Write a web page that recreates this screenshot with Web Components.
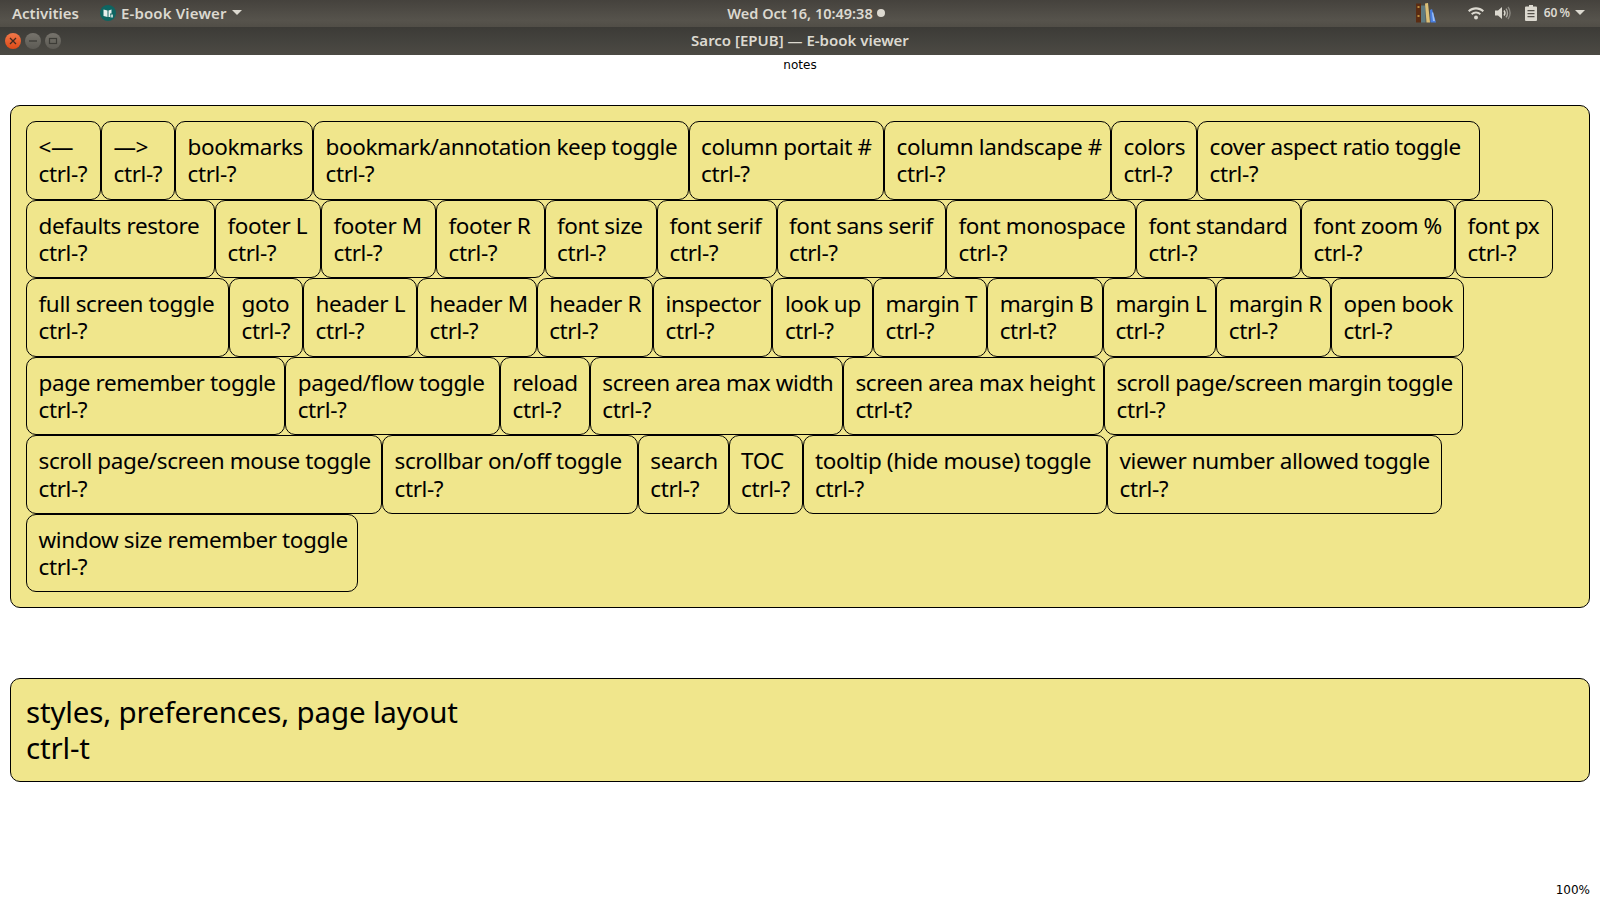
<!DOCTYPE html>
<html lang="en">
<head>
<meta charset="utf-8">
<title>Sarco [EPUB] — E-book viewer</title>
<style>
html, body { margin: 0; height: 100%; background: #fff; overflow: hidden; }
body { display: flex; flex-direction: column; height: 900px; }
</style>
</head>
<body>
<top-bar></top-bar>
<title-bar>Sarco [EPUB] — E-book viewer</title-bar>
<notes-page>
  <key-panel>
    <key-cap w="75" name="&lt;—"></key-cap><key-cap w="74" name="—&gt;"></key-cap><key-cap w="138" name="bookmarks"></key-cap><key-cap w="375.5" name="bookmark/annotation keep toggle"></key-cap><key-cap w="195.5" name="column portait #"></key-cap><key-cap w="227" name="column landscape #"></key-cap><key-cap w="86" name="colors"></key-cap><key-cap w="282.6" name="cover aspect ratio toggle"></key-cap>
    <key-cap w="189" name="defaults restore"></key-cap><key-cap w="106" name="footer L"></key-cap><key-cap w="115" name="footer M"></key-cap><key-cap w="108.5" name="footer R"></key-cap><key-cap w="112.5" name="font size"></key-cap><key-cap w="119.5" name="font serif"></key-cap><key-cap w="169.5" name="font sans serif"></key-cap><key-cap w="190" name="font monospace"></key-cap><key-cap w="165" name="font standard"></key-cap><key-cap w="154" name="font zoom %"></key-cap><key-cap w="98" name="font px"></key-cap>
    <key-cap w="203" name="full screen toggle"></key-cap><key-cap w="74" name="goto"></key-cap><key-cap w="114" name="header L"></key-cap><key-cap w="119.7" name="header M"></key-cap><key-cap w="116.3" name="header R"></key-cap><key-cap w="119.4" name="inspector"></key-cap><key-cap w="100.6" name="look up"></key-cap><key-cap w="114.2" name="margin T"></key-cap><key-cap w="115.8" name="margin B" combo="ctrl-t?"></key-cap><key-cap w="113.3" name="margin L"></key-cap><key-cap w="114.7" name="margin R"></key-cap><key-cap w="133" name="open book"></key-cap>
    <key-cap w="259.2" name="page remember toggle"></key-cap><key-cap w="214.8" name="paged/flow toggle"></key-cap><key-cap w="89.8" name="reload"></key-cap><key-cap w="253.1" name="screen area max width"></key-cap><key-cap w="261.1" name="screen area max height" combo="ctrl-t?"></key-cap><key-cap w="358.8" name="scroll page/screen margin toggle"></key-cap>
    <key-cap w="356" name="scroll page/screen mouse toggle"></key-cap><key-cap w="255.8" name="scrollbar on/off toggle"></key-cap><key-cap w="90.8" name="search"></key-cap><key-cap w="74" name="TOC"></key-cap><key-cap w="304.4" name="tooltip (hide mouse) toggle"></key-cap><key-cap w="335" name="viewer number allowed toggle"></key-cap>
    <key-cap w="331.7" name="window size remember toggle"></key-cap>
  </key-panel>
  <key-panel big>styles, preferences, page layout<br>ctrl-t</key-panel>
</notes-page>

<script>
const UI_FONT = '"Noto Sans", "Open Sans", sans-serif';

class TopBar extends HTMLElement {
    constructor() {
        super();
        this.attachShadow({ mode: 'open' });
    }

    connectedCallback() {
        this.shadowRoot.innerHTML = `
            <style>
                :host {
                    display: grid;
                    grid-template-columns: 1fr auto 1fr;
                    align-items: center;
                    height: 27px;
                    flex: none;
                    padding: 0 15px 2px 12px;
                    box-sizing: border-box;
                    background: linear-gradient(#45423d, #56534c 75%, #514e47);
                    color: #dcd9d0;
                    font: 600 15px ${UI_FONT};
                }
                .left, .center, .right { display: flex; align-items: center; }
                .app { margin-left: 21px; gap: 5px; letter-spacing: 0.15px; }
                .center { padding-left: 15px; font-size: 14.5px; }
                .dot { width: 8px; height: 8px; margin-left: 4px; border-radius: 50%; background: #dcd9d0; }
                .right { justify-content: flex-end; }
                svg { display: block; flex: none; }
            </style>
            <div class="left">
                <span>Activities</span>
                <div class="left app">
                    <svg width="16" height="16" viewBox="0 0 16 16">
                        <circle cx="8" cy="8" r="8" fill="#0e6562"/>
                        <path d="M3.5 4.5 7.5 5.5V12L3.5 11ZM8.5 5.5 11.5 4.5V8.5L10 8.5 10 12 8.5 12Z" fill="#e8f0ee"/>
                        <path d="M10.5 9.5h2.5v3h-2.5z" fill="#b8d4d0"/>
                    </svg>
                    <span>E-book Viewer</span>
                    <svg width="10" height="5" viewBox="0 0 10 5"><path d="M0 0h10L5 5z" fill="#dcd9d0"/></svg>
                </div>
            </div>
            <div class="center"><span>Wed Oct 16, 10:49:38</span><span class="dot"></span></div>
            <div class="right">
                <svg width="20" height="20" viewBox="0 0 20 20" style="margin-right:32px">
                    <rect x="0" y="0.5" width="5" height="19" fill="#5b2c12"/>
                    <rect x="1.5" y="3" width="2" height="2" fill="#b98a3c"/>
                    <rect x="1.5" y="12" width="2" height="2" fill="#b98a3c"/>
                    <rect x="5" y="2.5" width="4.5" height="17" fill="#5f7a80"/>
                    <path d="M9 .5 12 0 14 19.5H10.5Z" fill="#dcc078"/>
                    <path d="M14 7 16 6 20 19.5H14.5Z" fill="#4a7fe0"/>
                    <path d="M16 10 17 9 19 18H17Z" fill="#9cc0f4"/>
                </svg>
                <svg width="16" height="14" viewBox="0 0 16 14" style="margin-right:11px">
                    <path d="M0 4.6C4.4.2 11.6.2 16 4.6L14.6 6C11 2.6 5 2.6 1.4 6Z" fill="#dcd9d0"/>
                    <path d="M3 7.6C5.8 4.8 10.2 4.8 13 7.6L11.6 9C9.6 7 6.4 7 4.4 9Z" fill="#dcd9d0"/>
                    <circle cx="8" cy="11.6" r="2" fill="#dcd9d0"/>
                </svg>
                <svg width="16" height="14" viewBox="0 0 16 14" style="margin-right:14px">
                    <path d="M0 4.5H3L7 1V13L3 9.5H0Z" fill="#dcd9d0"/>
                    <path d="M9 4.5C10.2 6 10.2 8 9 9.5" fill="none" stroke="#dcd9d0" stroke-width="1.4"/>
                    <path d="M11 2.6C13 5 13 9 11 11.4" fill="none" stroke="#aaa79f" stroke-width="1.4"/>
                    <path d="M13 1C15.8 4.4 15.8 9.6 13 13" fill="none" stroke="#8a8780" stroke-width="1.4"/>
                </svg>
                <svg width="12" height="16" viewBox="0 0 12 16" style="margin-right:7px">
                    <path d="M4 0h4v1.5h3a1 1 0 0 1 1 1V15a1 1 0 0 1-1 1H1a1 1 0 0 1-1-1V2.500a1 1 0 0 1 1-1h3Z" fill="#dcd9d0"/>
                    <path d="M2.500 5h7v1.300h-7zM2.500 8h7v1.300h-7zM2.500 11h7v1.300h-7z" fill="#55524b"/>
                </svg>
                <span style="font-size:12px;word-spacing:-1px">60 %</span>
                <svg width="10" height="5" viewBox="0 0 10 5" style="margin-left:5px"><path d="M0 0h10L5 5z" fill="#dcd9d0"/></svg>
            </div>
        `;
    }
}

class TitleBar extends HTMLElement {
    constructor() {
        super();
        this.attachShadow({ mode: 'open' });
    }

    connectedCallback() {
        this.shadowRoot.innerHTML = `
            <style>
                :host {
                    display: flex;
                    align-items: center;
                    justify-content: center;
                    position: relative;
                    flex: none;
                    height: 28px;
                    padding-bottom: 2px;
                    box-sizing: border-box;
                    background: linear-gradient(#3c3b37, #4c4a44);
                    color: #dcd9d0;
                    font: 600 15px ${UI_FONT};
                }
                .buttons { position: absolute; left: 5px; top: 6px; display: flex; gap: 4px; }
            </style>
            <svg class="buttons" width="56" height="16" viewBox="0 0 56 16">
                <defs>
                    <linearGradient id="red" x1="0" y1="0" x2="0" y2="1"><stop offset="0" stop-color="#f0784a"/><stop offset="1" stop-color="#df4a17"/></linearGradient>
                    <linearGradient id="grey" x1="0" y1="0" x2="0" y2="1"><stop offset="0" stop-color="#76736c"/><stop offset="1" stop-color="#5c5a54"/></linearGradient>
                </defs>
                <circle cx="8" cy="8" r="8" fill="url(#red)"/>
                <path d="M5 5 11 11M11 5 5 11" stroke="#41291f" stroke-width="1.300"/>
                <circle cx="28" cy="8" r="8" fill="url(#grey)"/>
                <path d="M24 8H32" stroke="#3d3c37" stroke-width="1.300"/>
                <circle cx="48" cy="8" r="8" fill="url(#grey)"/>
                <rect x="44.500" y="5.500" width="7" height="5" fill="none" stroke="#3d3c37" stroke-width="1.200"/>
            </svg>
            <slot></slot>
        `;
    }
}

class NotesPage extends HTMLElement {
    constructor() {
        super();
        this.attachShadow({ mode: 'open' });
    }

    connectedCallback() {
        this.shadowRoot.innerHTML = `
            <style>
                :host {
                    display: flex;
                    flex-direction: column;
                    flex: 1;
                    min-height: 0;
                    padding: 0 10px 3px;
                    color: #000;
                    font: 12px/14px "DejaVu Sans", sans-serif;
                }
                .heading { margin-top: 3px; height: 47px; text-align: center; }
                .stack { display: flex; flex-direction: column; gap: 69.6px; }
                .zoom { margin-top: auto; text-align: right; }
            </style>
            <div class="heading">notes</div>
            <div class="stack"><slot></slot></div>
            <div class="zoom">100%</div>
        `;
    }
}

class KeyPanel extends HTMLElement {
    constructor() {
        super();
        this.attachShadow({ mode: 'open' });
    }

    connectedCallback() {
        this.shadowRoot.innerHTML = `
            <style>
                :host {
                    display: block;
                    border: 1px solid #000;
                    border-radius: 10px;
                    background: khaki;
                    padding: 15px;
                    color: #000;
                    font-family: ${UI_FONT};
                }
                :host([big]) { font-size: 29.5px; line-height: 36px; letter-spacing: -0.16px; }
                .keys { display: flex; flex-wrap: wrap; }
                :host([big]) .keys { display: block; }
            </style>
            <div class="keys"><slot></slot></div>
        `;
    }
}

class KeyCap extends HTMLElement {
    constructor() {
        super();
        this.attachShadow({ mode: 'open' });
    }

    connectedCallback() {
        const name = this.getAttribute('name');
        const combo = this.getAttribute('combo') || 'ctrl-?';
        this.style.width = this.getAttribute('w') + 'px';
        this.shadowRoot.innerHTML = `
            <style>
                :host {
                    display: block;
                    flex: none;
                    box-sizing: border-box;
                    height: 78.55px;
                    padding: 11.2px 0 0 11.5px;
                    border: 1px solid #000;
                    border-radius: 10px;
                    font-size: 22.5px;
                    letter-spacing: -0.38px;
                    line-height: 27.2px;
                    white-space: nowrap;
                }
                div { display: block; }
            </style>
            <div></div>
            <div></div>
        `;
        const lines = this.shadowRoot.querySelectorAll('div');
        lines[0].textContent = name;
        lines[1].textContent = combo;
    }
}

customElements.define('top-bar', TopBar);
customElements.define('title-bar', TitleBar);
customElements.define('notes-page', NotesPage);
customElements.define('key-panel', KeyPanel);
customElements.define('key-cap', KeyCap);
</script>
</body>
</html>
